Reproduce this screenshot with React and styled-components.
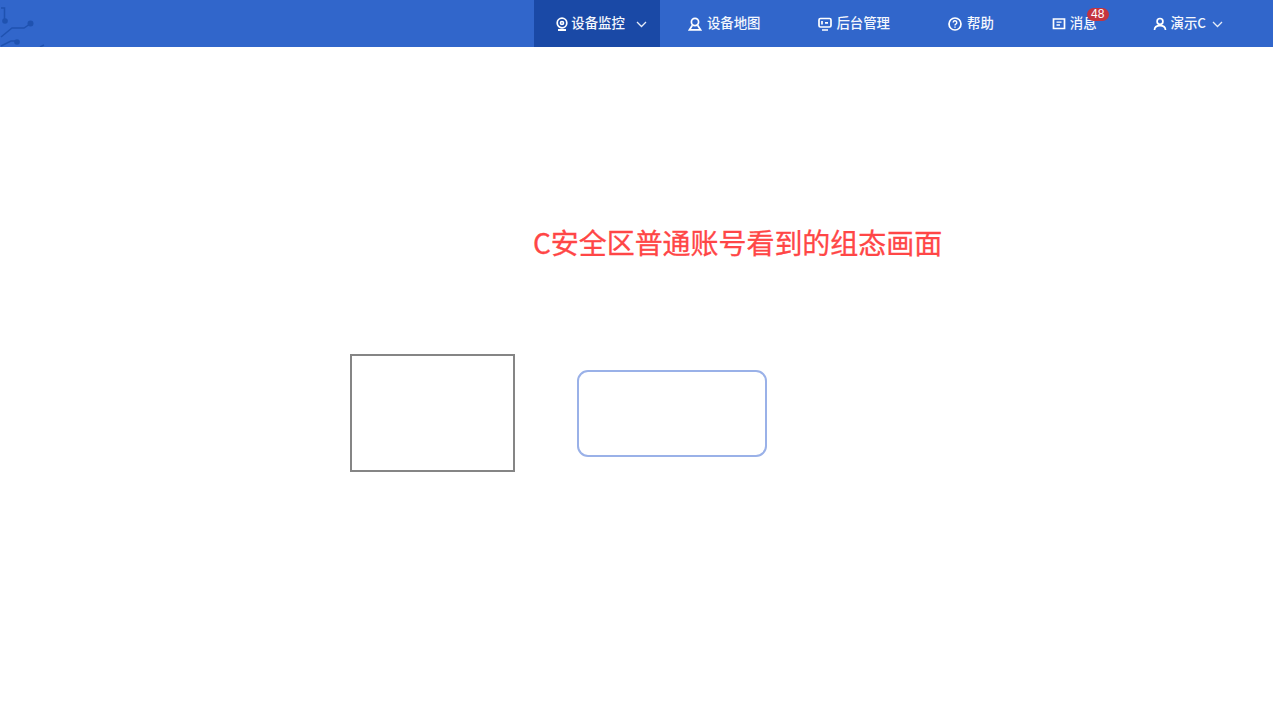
import React from "react";
import styled, { createGlobalStyle } from "styled-components";

const GlobalStyle = createGlobalStyle`
  html, body {
    margin: 0;
    padding: 0;
    background: #fff;
  }
  body {
    font-family: "Noto Sans CJK SC", sans-serif;
  }
`;

const Page = styled.div`
  width: 1273px;
  height: 702px;
  overflow: hidden;
  display: flex;
  flex-direction: column;
`;

const TopBar = styled.header`
  height: 47px;
  flex: none;
  display: flex;
  justify-content: space-between;
  background: #3166cb;
`;

const Circuit = styled.svg`
  width: 60px;
  height: 47px;
  display: block;
`;

const Nav = styled.nav`
  display: flex;
  height: 47px;
`;

const NavItem = styled.div`
  display: flex;
  align-items: center;
  height: 47px;
  box-sizing: border-box;
  padding: ${(p) => p.$pad || "0 28px"};
  color: #f4f7fd;
  font-size: 13.4px;
  font-weight: 500;
  background: ${(p) => (p.$active ? "#1a49a6" : "transparent")};
`;

const ItemIcon = styled.svg`
  width: 14px;
  height: 14px;
  margin-right: ${(p) => p.$gap || 4}px;
  flex: none;
  fill: none;
  stroke: #fff;
  stroke-width: 1.7;
`;

const Chevron = styled.svg`
  width: 11px;
  height: 7px;
  margin-left: ${(p) => p.$gap}px;
  margin-top: 2px;
  flex: none;
  fill: none;
  stroke: #e6ecf8;
  stroke-width: 1.3;
`;

const Label = styled.span`
  position: relative;
  white-space: nowrap;
  line-height: 20px;
  margin-top: -3px;
`;

const Badge = styled.span`
  position: absolute;
  top: -4px;
  left: 17px;
  width: 22px;
  height: 13px;
  border-radius: 7px;
  background: #c4343f;
  color: #fff;
  font-family: "Liberation Sans", sans-serif;
  font-size: 12px;
  font-weight: 400;
  line-height: 13px;
  text-align: center;
`;

const Canvas = styled.main`
  position: relative;
  flex: 1;
  background: #fff;
`;

const Title = styled.div`
  position: absolute;
  left: 533px;
  top: 175px;
  font-size: 28px;
  font-weight: 400;
  -webkit-text-stroke: 0.3px #ff4646;
  line-height: 40px;
  letter-spacing: -0.05px;
  color: #ff4646;
  white-space: nowrap;
`;

const PlainBox = styled.div`
  position: absolute;
  left: 350px;
  top: 307px;
  width: 165px;
  height: 118px;
  box-sizing: border-box;
  border: 2px solid #858585;
`;

const RoundBox = styled.div`
  position: absolute;
  left: 577px;
  top: 323px;
  width: 190px;
  height: 87px;
  box-sizing: border-box;
  border: 2px solid #9ab1e8;
  border-radius: 11px;
`;

function ChevronDown({ gap }) {
  return (
    <Chevron $gap={gap} viewBox="0 0 11 7">
      <path d="M1 1l4.5 4.5L10 1" />
    </Chevron>
  );
}

export default function App() {
  return (
    <Page>
      <GlobalStyle />
      <TopBar>
        <Circuit viewBox="0 0 60 47" fill="none" stroke="#1f52b0" strokeWidth="1.5">
          <path d="M1 8h3.5v13" />
          <circle cx="5" cy="21" r="2.8" fill="#1f52b0" stroke="none" />
          <path d="M1 37l11-9h12l6-4" />
          <circle cx="30.5" cy="23.5" r="3" fill="#1f52b0" stroke="none" />
          <path d="M1 46l10-5h6" />
          <circle cx="17" cy="42" r="2.8" fill="#1f52b0" stroke="none" />
          <path d="M40 47l4-2" />
        </Circuit>
        <Nav>
          <NavItem $active $pad="0 13px 0 21px">
            <ItemIcon viewBox="0 0 14 14" $gap={2}>
              <circle cx="7" cy="6" r="4.8" />
              <circle cx="7" cy="6" r="1.5" />
              <path d="M3 13h8" strokeWidth="2" />
            </ItemIcon>
            <Label>设备监控</Label>
            <ChevronDown gap={11} />
          </NavItem>
          <NavItem $pad="0 30px 0 28px">
            <ItemIcon viewBox="0 0 14 14" $gap={5}>
              <circle cx="7" cy="5" r="3.6" />
              <path d="M4.4 8.2L1.5 12.8h11L9.6 8.2" />
            </ItemIcon>
            <Label>设备地图</Label>
          </NavItem>
          <NavItem $pad="0 28px 0 28px">
            <ItemIcon viewBox="0 0 14 14">
              <rect x="1" y="1.5" width="12" height="8.5" rx="1.5" />
              <path d="M4 13h6M4 4v3.5M7 5.8h3" />
            </ItemIcon>
            <Label>后台管理</Label>
          </NavItem>
          <NavItem $pad="0 28px 0 30px">
            <ItemIcon viewBox="0 0 14 14" $gap={5}>
              <circle cx="7" cy="7" r="6" />
              <path d="M5.2 5.5a1.8 1.8 0 1 1 2.6 1.6c-.6.3-.8.6-.8 1.3M7 9.6v1.2" strokeWidth="1.4" />
            </ItemIcon>
            <Label>帮助</Label>
          </NavItem>
          <NavItem $pad="0 28px 0 30px">
            <ItemIcon viewBox="0 0 14 14">
              <path d="M1.5 2h11v9.5H1.5z" />
              <path d="M4.5 5.2h5M4.5 8h3.5" strokeWidth="1.3" />
            </ItemIcon>
            <Label>
              消息
              <Badge>48</Badge>
            </Label>
          </NavItem>
          <NavItem $pad="0 50px 0 28px">
            <ItemIcon viewBox="0 0 14 14">
              <circle cx="7" cy="4.4" r="2.9" />
              <path d="M1.5 13c0-3 2-4.4 5.5-4.4s5.5 1.4 5.5 4.4" />
            </ItemIcon>
            <Label>演示C</Label>
            <ChevronDown gap={6} />
          </NavItem>
        </Nav>
      </TopBar>
      <Canvas>
        <Title>C安全区普通账号看到的组态画面</Title>
        <PlainBox />
        <RoundBox />
      </Canvas>
    </Page>
  );
}
